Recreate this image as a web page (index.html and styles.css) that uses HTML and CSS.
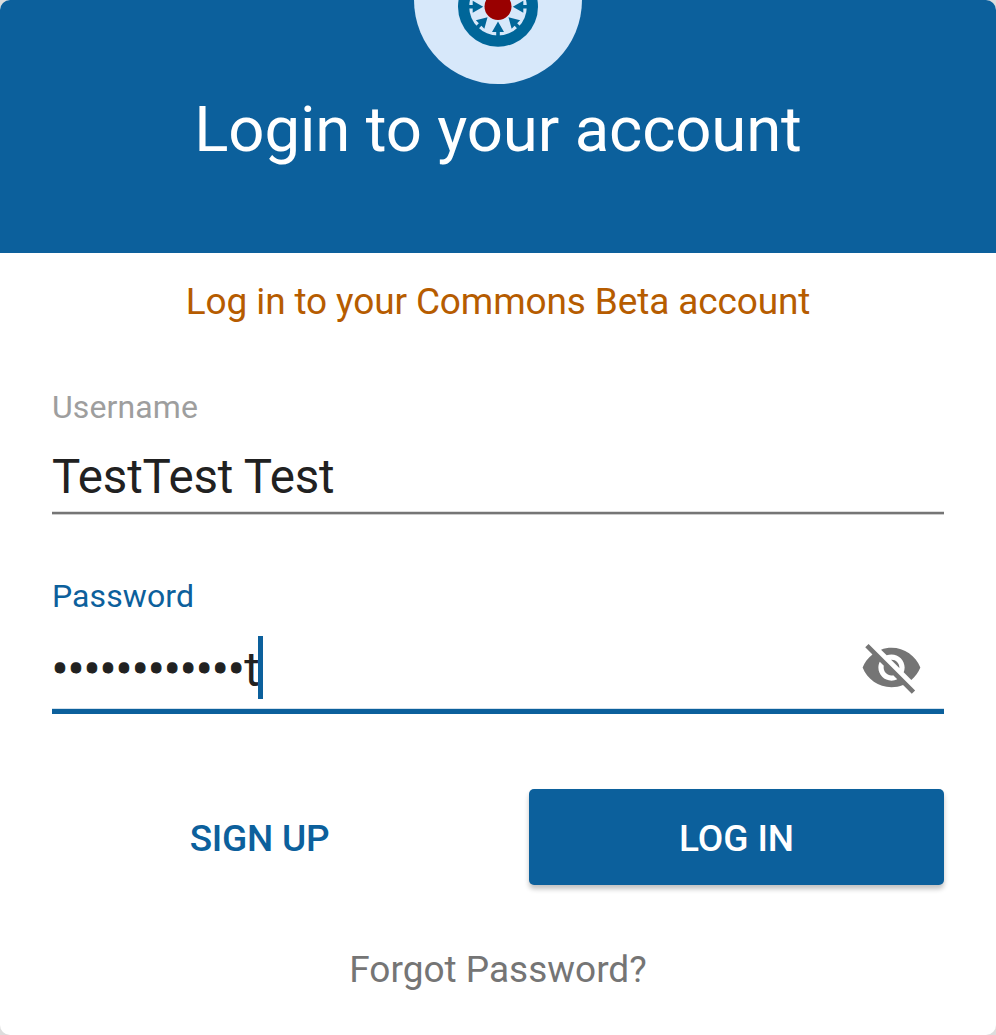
FILE: index.html
```html
<!DOCTYPE html>
<html lang="en">
<head>
<meta charset="utf-8">
<title>Login</title>
<link rel="stylesheet" href="styles.css">
</head>
<body>
<main class="card">
  <header class="header">
    <svg class="logo" viewBox="0 0 168 84" width="168" height="84">
      <circle cx="84" cy="0" r="84" fill="#d7e8fa"/>
      <circle cx="84" cy="6.700" r="40" fill="#069"/>
      <circle cx="84" cy="6.700" r="28.800" fill="#d7e8fa"/>
      <g fill="#069">
        <g id="arrow"><path d="M82.200 37V32H78L84 21.500L90 32H85.800V37Z"/></g>
        <use href="#arrow" transform="rotate(45 84 6.700)"/>
        <use href="#arrow" transform="rotate(90 84 6.700)"/>
        <use href="#arrow" transform="rotate(-45 84 6.700)"/>
        <use href="#arrow" transform="rotate(-90 84 6.700)"/>
      </g>
      <circle cx="84" cy="6.500" r="13.500" fill="#900"/>
    </svg>
    <h1 class="title">Login to your account</h1>
  </header>
  <form class="form">
    <p class="notice">Log in to your Commons Beta account</p>
    <div class="field">
      <label class="label">Username</label>
      <div class="value">TestTest Test</div>
    </div>
    <div class="field active">
      <label class="label">Password</label>
      <div class="value"><span class="dots">••••••••••••</span><span class="last">t</span><i class="caret"></i>
        <svg class="eye" viewBox="0 0 24 24" width="63" height="63"><path d="M12 7c2.760 0 5 2.240 5 5 0 .65-.13 1.260-.36 1.830l2.920 2.920c1.510-1.260 2.700-2.890 3.430-4.750-1.730-4.390-6-7.500-11-7.500-1.400 0-2.740.25-3.980.7l2.160 2.160C10.740 7.130 11.350 7 12 7zM2 4.270l2.280 2.280.46.46C3.080 8.300 1.780 10.020 1 12c1.730 4.390 6 7.500 11 7.500 1.550 0 3.030-.3 4.380-.84l.42.42L19.730 22 21 20.730 3.270 3 2 4.270zM7.530 9.800l1.550 1.550c-.05.21-.08.43-.08.65 0 1.660 1.340 3 3 3 .22 0 .44-.03.65-.08l1.550 1.550c-.67.33-1.410.53-2.200.53-2.760 0-5-2.240-5-5 0-.79.2-1.530.53-2.200zm4.310-.78l3.150 3.150.02-.16c0-1.660-1.340-3-3-3l-.17.01z"/></svg>
      </div>
    </div>
    <div class="actions">
      <button type="button" class="button">SIGN UP</button>
      <button type="button" class="button primary">LOG IN</button>
    </div>
    <a class="forgot">Forgot Password?</a>
  </form>
</main>
</body>
</html>
```
FILE: styles.css
```css
* { box-sizing: border-box; }
body { margin: 0; background: #ddd; font-family: Roboto, sans-serif; }
.card { height: 1035px; background: #fff; border-radius: 10px; overflow: hidden; }
.header { height: 253px; background: #0c609c; display: flex; flex-direction: column; align-items: center; }
.logo { display: block; }
.title { margin: 8px 0 0; font-size: 63.5px; line-height: 76px; letter-spacing: -0.15px; font-weight: 400; color: #fff; white-space: nowrap; }
.form { padding: 26px 52px 0; display: flex; flex-direction: column; }
.notice { margin: 0; font-size: 37px; line-height: 46px; letter-spacing: -0.13px; color: #b65c00; text-align: center; white-space: nowrap; }
.field { margin-top: 62px; border-bottom: 2px solid #757575; height: 127px; box-shadow: 0 1px #ccc, inset 0 -1px #ddd; }
.label { display: block; font-size: 32px; line-height: 40px; letter-spacing: 0.1px; color: #9e9e9e; }
.value { display: flex; align-items: center; margin-top: 18px; font-size: 47.5px; line-height: 64px; height: 64px; letter-spacing: -0.18px; color: #212121; }
.active { height: 138px; border-bottom: 5px solid #0c609c; box-shadow: inset 0 -1px #d3e1ec; }
.active .label { color: #0c609c; }
.active .value { height: 63px; margin-top: 20px; }
.dots { letter-spacing: 0; -webkit-text-stroke: 1px #212121; padding-top: 5px; }
.last { padding-top: 5px; }
.caret { width: 5px; height: 63px; margin-left: -2px; background: #0c609c; }
.eye { margin: 0 21px 0 auto; fill: #757575; }
.actions { display: grid; grid-template-columns: 415px 415px; justify-content: space-between; margin-top: 75px; }
.button { height: 96px; padding: 2px 0 0; border: 0; border-radius: 5px; background: none; color: #0c609c; font: 500 37px Roboto, sans-serif; letter-spacing: -0.25px; }
.primary { letter-spacing: -0.1px; background: #0c609c; color: #fff; box-shadow: 0 4px 5px rgba(0,0,0,.24); }
.forgot { margin-top: 62px; font-size: 37px; line-height: 46px; color: #757575; text-align: center; }
```
